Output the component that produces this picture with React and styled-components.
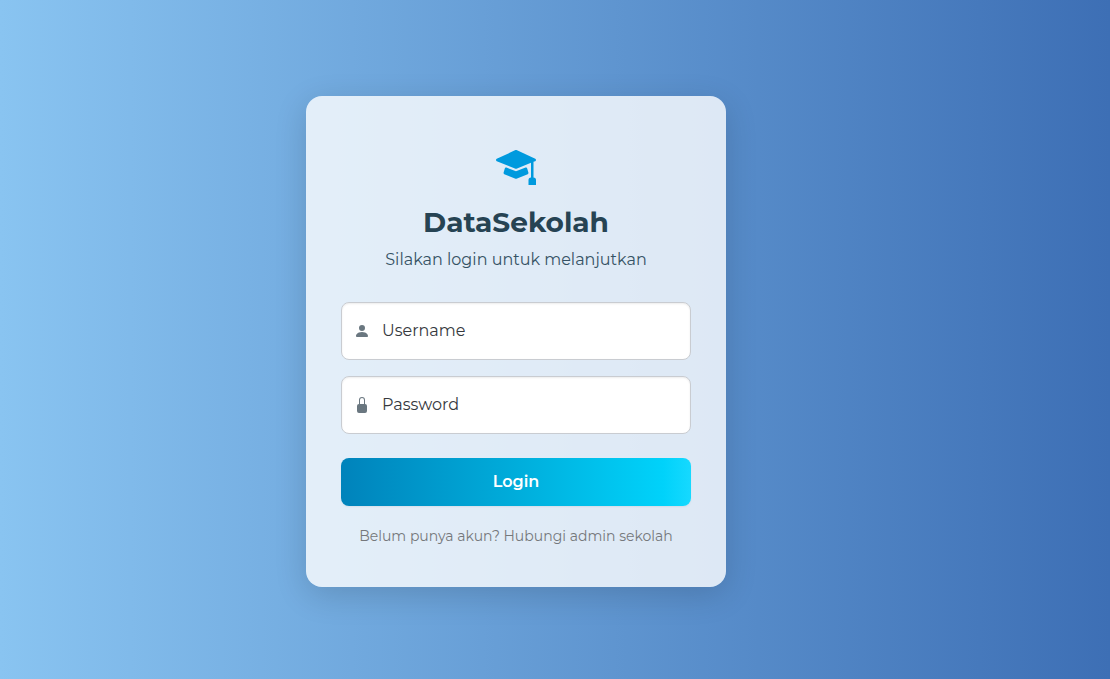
import React from "react";
import styled, { createGlobalStyle } from "styled-components";
import { BsLockFill, BsMortarboardFill, BsPersonFill } from "react-icons/bs";

const GlobalStyle = createGlobalStyle`
  *, *::before, *::after { box-sizing: border-box; }
  body {
    margin: 0;
    font-family: Montserrat, "Open Sans", sans-serif;
    color: #212529;
  }
`;

const Page = styled.main`
  min-height: 100vh;
  display: flex;
  align-items: center;
  justify-content: center;
  padding: 20px 78px 16px 0;
  background: linear-gradient(90deg, #89c4f1 0%, #3d6fb5 100%);
`;

const Card = styled.section`
  width: 100%;
  max-width: 420px;
  padding: 49px 35px 40px;
  border-radius: 16px;
  background: rgba(255, 255, 255, 0.8);
  box-shadow: 0 8px 32px rgba(0, 0, 0, 0.15);
  text-align: center;
`;

const Logo = styled(BsMortarboardFill)`
  display: block;
  width: 40px;
  height: 40px;
  margin: 0 auto 17px;
  color: #009ade;
`;

const Title = styled.h1`
  margin: 0 0 6px;
  font-size: 28px;
  line-height: 40px;
  font-weight: 700;
  color: #264353;
`;

const Subtitle = styled.p`
  margin: 0 0 30px;
  font-size: 16px;
  line-height: 24px;
  color: #355264;
`;

const Form = styled.form`
  display: flex;
  flex-direction: column;
  gap: 16px;
`;

const Field = styled.label`
  display: flex;
  align-items: center;
  gap: 12px;
  height: 58px;
  padding: 0 12px;
  border: 1px solid #c9ccd1;
  border-radius: 8px;
  background: #fff;
  box-shadow: inset 0 1px 2px rgba(0, 0, 0, 0.08);
  color: #6a7780;

  svg {
    flex: none;
    width: 16px;
    height: 16px;
  }
`;

const Input = styled.input`
  flex: 1;
  min-width: 0;
  padding: 0;
  border: 0;
  outline: 0;
  background: transparent;
  font: inherit;
  font-size: 16px;
  line-height: 24px;
  color: #212529;

  &::placeholder {
    color: #36393e;
    opacity: 1;
  }
`;

const SubmitButton = styled.button`
  height: 48px;
  margin-top: 8px;
  padding: 0 16px 2px;
  border: 0;
  border-radius: 8px;
  background: linear-gradient(90deg, #0083bb 0%, #00addb 50%, #00d2fa 92%, #16d9ff 100%);
  box-shadow: 0 1px 2px rgba(0, 0, 0, 0.06);
  font: inherit;
  font-size: 16px;
  font-weight: 600;
  color: #fff;
  cursor: pointer;
`;

const Help = styled.p`
  margin: 20px 0 0;
  font-size: 14px;
  line-height: 21px;
  color: #75787b;
`;

export default function App() {
  return (
    <>
      <GlobalStyle />
      <Page>
        <Card>
          <Logo aria-hidden="true" />
          <Title>DataSekolah</Title>
          <Subtitle>Silakan login untuk melanjutkan</Subtitle>
          <Form onSubmit={(event) => event.preventDefault()}>
            <Field htmlFor="username">
              <BsPersonFill aria-hidden="true" />
              <Input id="username" type="text" placeholder="Username" aria-label="Username" autoComplete="username" />
            </Field>
            <Field htmlFor="password">
              <BsLockFill aria-hidden="true" />
              <Input id="password" type="password" placeholder="Password" aria-label="Password" autoComplete="current-password" />
            </Field>
            <SubmitButton type="submit">Login</SubmitButton>
          </Form>
          <Help>Belum punya akun? Hubungi admin sekolah</Help>
        </Card>
      </Page>
    </>
  );
}
